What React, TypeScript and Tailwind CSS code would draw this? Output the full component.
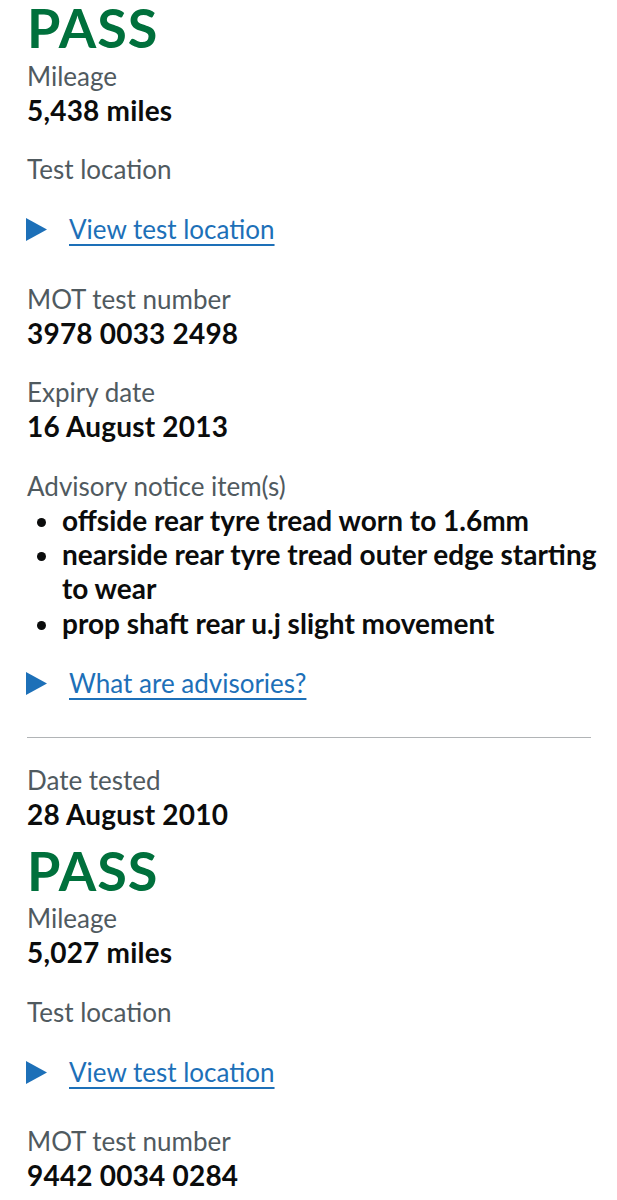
import React from "react";

const font = { fontFamily: "Lato, 'Noto Sans', sans-serif" };

function Label({ children, className = "" }: { children: React.ReactNode; className?: string }) {
  return <div className={`text-[26px] leading-[34px] text-[#505a5f] ${className}`}>{children}</div>;
}

function Value({ children, className = "" }: { children: React.ReactNode; className?: string }) {
  return (
    <div className={`text-[28px] leading-[34px] tracking-[0.2px] font-bold text-[#0b0c0c] ${className}`}>
      {children}
    </div>
  );
}

function Pass({ className = "" }: { className?: string }) {
  return (
    <div className={`h-[56px] flex items-center ${className}`}>
      <span className="text-[54px] leading-[66px] tracking-[1px] font-bold text-[#00703c]">PASS</span>
    </div>
  );
}

function Details({ text, className = "" }: { text: string; className?: string }) {
  return (
    <div className={`flex items-center ${className}`}>
      <svg width="21" height="23" viewBox="0 0 21 23" className="shrink-0 -ml-[1px]">
        <polygon points="0,0 21,11.5 0,23" fill="#1d70b8" />
      </svg>
      <a
        href="#"
        className="ml-[22px] text-[26px] leading-[34px] text-[#1d70b8] underline decoration-[1.5px] underline-offset-[5px]"
      >
        {text}
      </a>
    </div>
  );
}

export default function App() {
  return (
    <div style={font} className="bg-white w-[617px] min-h-[1200px] pl-[27px] pr-[10px] overflow-hidden">
      <Pass />
      <Label className="mt-[3px]">Mileage</Label>
      <Value>5,438 miles</Value>
      <Label className="mt-[25px]">Test location</Label>
      <Details text="View test location" className="mt-[26px]" />
      <Label className="mt-[36px]">MOT test number</Label>
      <Value>3978 0033 2498</Value>
      <Label className="mt-[25px]">Expiry date</Label>
      <Value>16 August 2013</Value>
      <Label className="mt-[26px]">Advisory notice item(s)</Label>
      <ul className="list-disc pl-[35px] text-[28px] leading-[34px] font-bold text-[#0b0c0c] marker:text-[#0b0c0c]">
        <li>offside rear tyre tread worn to 1.6mm</li>
        <li>nearside rear tyre tread outer edge starting to wear</li>
        <li className="mt-[1px]">prop shaft rear u.j slight movement</li>
      </ul>
      <Details text="What are advisories?" className="mt-[26px]" />
      <div className="mt-[37px] mr-[16px] h-px bg-[#b1b4b6]" />
      <Label className="mt-[25px]">Date tested</Label>
      <Value>28 August 2010</Value>
      <Pass className="mt-[12px]" />
      <Label className="mt-[2px]">Mileage</Label>
      <Value>5,027 miles</Value>
      <Label className="mt-[26px]">Test location</Label>
      <Details text="View test location" className="mt-[26px]" />
      <Label className="mt-[35px]">MOT test number</Label>
      <Value>9442 0034 0284</Value>
    </div>
  );
}
